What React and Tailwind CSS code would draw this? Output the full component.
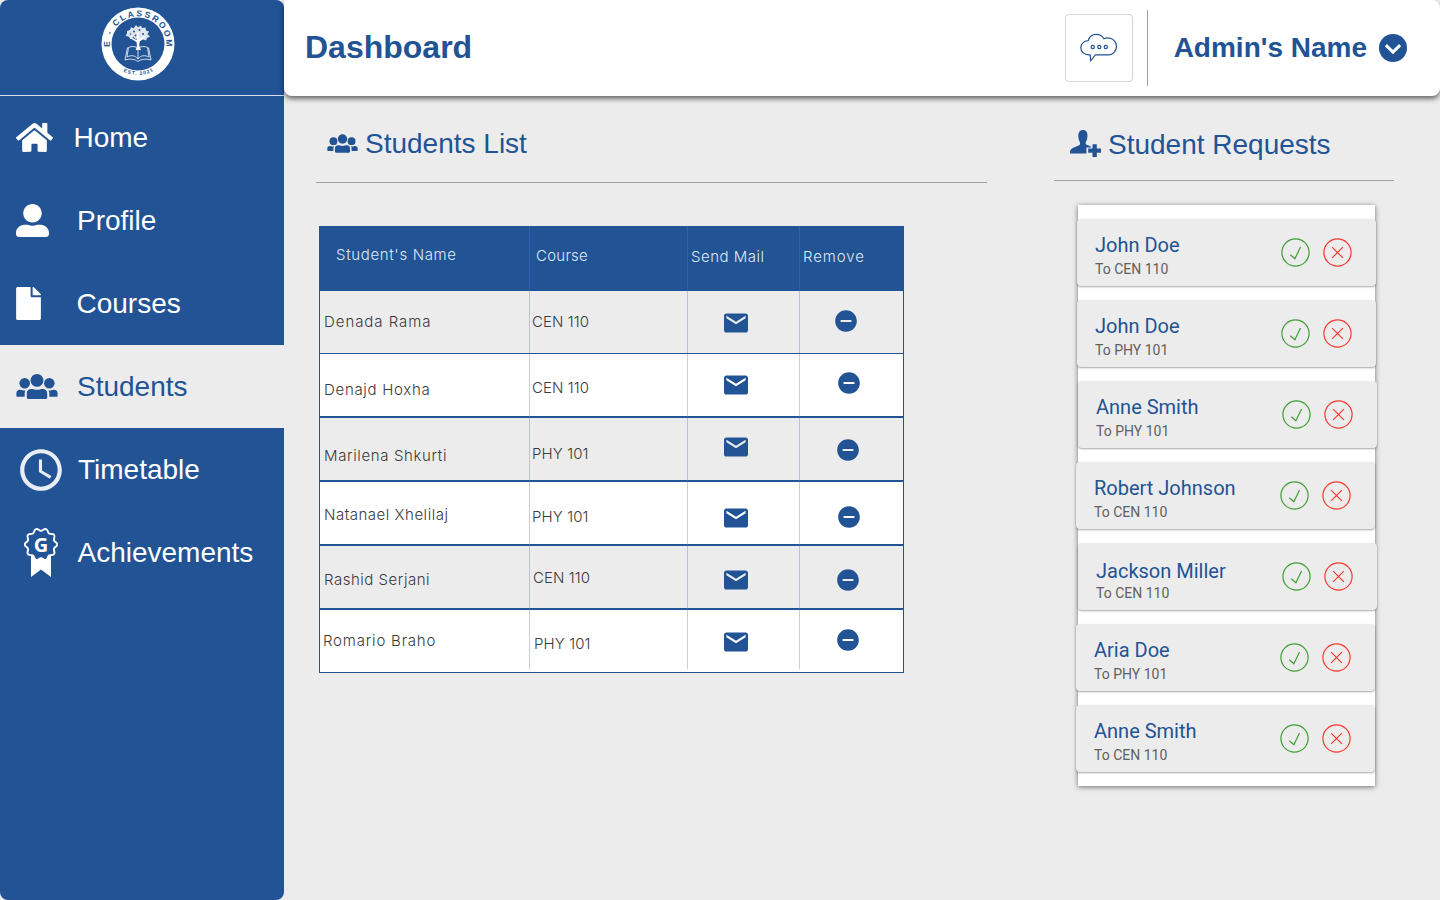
import React from "react";
import { FaHome, FaUserAlt, FaFile } from "react-icons/fa";
import { MdAccessTime, MdEmail, MdRemoveCircle } from "react-icons/md";

function Logo() {
  return (
    <svg width="74" height="74" viewBox="0 0 74 74">
      <circle cx="37" cy="37" r="36.5" fill="#fff" />
      <circle cx="37" cy="37" r="26.5" fill="#225395" />
      <defs>
        <path id="ringTop" d="M8.8 40 A28.3 28.3 0 1 1 65.2 40" />
        <path id="ringBottom" d="M10 53 A31.8 31.8 0 0 0 64 53" />
      </defs>
      <text fill="#225395" fontFamily="'Liberation Sans Narrow', 'Liberation Sans', sans-serif" fontWeight="700" fontSize="8.5">
        <textPath href="#ringTop" startOffset="0" textLength="93" lengthAdjust="spacing">E - CLASSROOM</textPath>
      </text>
      <text fill="#225395" fontFamily="'Liberation Sans Narrow', 'Liberation Sans', sans-serif" fontWeight="700" fontSize="5">
        <textPath href="#ringBottom" startOffset="17" textLength="31" lengthAdjust="spacing">EST. 2021</textPath>
      </text>
      <g fill="#fff">
        <path d="M34.5 43c1.5-3 1.700-5 .9-8l-6-3.700.6-1 5.600 2.700.4-8h1.500l.5 7.500 5-3.500.7 1-5 4.500c-.8 3-.4 5.500 1.300 8.500z" />
        <path d="M26 24l3-1 1-3 2.500 1.500L35 18l2 2.200 3-1.800 1 2.600 3.500-.5.500 3 3 1-1.500 2.700 2.500 2.300-3 1.500-1 2.500-3-1-3 1.500-1.500-3-3 1-2-2-3 2-2-2.500-3-.5 1.500-2.500z" fillOpacity="0.85" />
      </g>
      <g fill="#225395">
        <circle cx="33" cy="24.5" r="1" />
        <circle cx="38.5" cy="23" r="1" />
        <circle cx="42" cy="27" r="1" />
        <circle cx="34.5" cy="28.5" r="0.9" />
        <circle cx="29.5" cy="27" r="0.8" />
      </g>
      <g fill="none" stroke="#fff" strokeWidth="0.8">
        <path d="M37 52c-3-4-7-4-11-2l1.500-9.500c3-1.500 6-1.200 8 0M37 52c3-4 7-4 11-2l-1.500-9.500c-3-1.500-6-1.200-8 0M37 43v9" />
        <path d="M26.5 40.5L24 53c5-1.500 10-1 13 1.500 3-2.500 8-3 13-1.500l-2.500-12.500" />
      </g>
    </svg>
  );
}

function UsersIcon({ className }) {
  return (
    <svg className={className} viewBox="0 0 42 25" fill="currentColor">
      <circle cx="21" cy="6.4" r="6.4" />
      <circle cx="8.7" cy="9.3" r="5.3" />
      <circle cx="33.3" cy="9.3" r="5.3" />
      <path d="M10.8 23.5v-4.300c0-2.600 1.800-4.300 4.300-4.300.9 0 1.600.2 2.300.4 2.300.7 4.900.7 7.200 0 .7-.2 1.400-.4 2.300-.4 2.500 0 4.300 1.700 4.300 4.300v4.300c0 .9-.6 1.500-1.500 1.500H12.300c-.9 0-1.500-.6-1.500-1.500z" />
      <path d="M.4 21.7v-2.600c0-1.900 1.400-3.300 3.400-3.300.6 0 1.200.1 1.700.3 1.300.4 2.600.5 4 .2-.6 1-.8 2-.8 3.200v3.300H1.400c-.6 0-1-.4-1-1.100z" />
      <path d="M41.6 21.7v-2.600c0-1.900-1.400-3.300-3.400-3.300-.6 0-1.200.1-1.700.3-1.300.4-2.600.5-4 .2.600 1 .8 2 .8 3.200v3.300h7.300c.6 0 1-.4 1-1.100z" />
    </svg>
  );
}

function AwardIcon() {
  const points = Array.from({ length: 96 }, (_, i) => {
    const a = (i / 96) * Math.PI * 2;
    const r = 14.9 + 1.3 * Math.cos(a * 10 + Math.PI);
    return `${(17 + r * Math.sin(a)).toFixed(2)},${(16.5 - r * Math.cos(a)).toFixed(2)}`;
  }).join(" ");
  return (
    <svg width="34" height="50" viewBox="0 0 34 50">
      <path d="M7 27h20v22l-10-7.500L7 49z" fill="#fff" />
      <polygon points={points} fill="#225395" stroke="#fff" strokeWidth="1.9" strokeLinejoin="round" />
      <text x="17" y="23.5" textAnchor="middle" fill="#fff" fontFamily="'Open Sans', sans-serif" fontWeight="700" fontSize="20">
        G
      </text>
    </svg>
  );
}

function ChevronCircleIcon() {
  return (
    <svg width="28" height="28" viewBox="0 0 28 28">
      <circle cx="14" cy="14" r="14" fill="#225395" />
      <path d="M6.900 11.100l7.100 7 7.100-7" fill="none" stroke="#fff" strokeWidth="3" />
    </svg>
  );
}

function ChatCloudIcon() {
  return (
    <svg width="38" height="30" viewBox="0 0 38 30" fill="none" stroke="#225395" strokeWidth="1.2" strokeLinejoin="round">
      <path d="M10.200 21.900H8.500C4 21.600.8 18.600.8 14.800c0-3.900 3-7 7.500-7.200C9.300 3.800 12.500 1.300 16.300 1.300c3.400 0 6.200 1.700 7.600 4.500 1.200-.6 2.500-.9 3.900-.9 5 0 8.700 3.800 8.700 8.500 0 4.600-3.700 8.500-8 8.500H15.300L10.600 28z" />
      <circle cx="12.800" cy="14" r="1.6" />
      <circle cx="19.300" cy="14" r="1.6" />
      <circle cx="25.800" cy="14" r="1.6" />
    </svg>
  );
}

function UserPlusIcon() {
  return (
    <svg className="-mt-0.5" width="32" height="28" viewBox="0 0 32 28" fill="#225395">
      <path d="M13 0c3 0 4.500 2 4.500 5.500 0 3-.8 5.300-1.800 6.800v1.900c1.300.8 3.300 1.400 4.500 2l.7.400v1h-4.500v5.900H0c0-3.600.8-4.600 3.300-5.800 2.200-1 5.200-1.900 6.700-3.300v-2C9 10.900 8.300 8.500 8.300 5.500 8.300 2 10 0 13 0z" />
      <path d="M22.5 14.200h4.300v4.400H31v4.100h-4.200V27h-4.300v-4.300h-4.300v-4.100h4.300z" />
    </svg>
  );
}

function AcceptIcon() {
  return (
    <svg width="29" height="29" viewBox="0.5 0.5 29 29" fill="none" stroke="#3f9f35" strokeWidth="1.2">
      <circle cx="15" cy="15" r="13.6" />
      <path d="M9.800 17.200l4.600 4L20 9.600" />
    </svg>
  );
}

function RejectIcon() {
  return (
    <svg width="29" height="29" viewBox="0.5 0.5 29 29" fill="none" stroke="#f43a30" strokeWidth="1.2">
      <circle cx="15" cy="15" r="13.6" />
      <path d="M9.600 9.600l10.800 10.800M20.400 9.600L9.600 20.400" />
    </svg>
  );
}

const navItems = [
  { label: "Home", icon: <FaHome className="h-[33px] w-[37px]" />, iconPad: "pl-4 w-[73.5px]" },
  { label: "Profile", icon: <FaUserAlt className="size-[33px]" />, iconPad: "pl-4 w-[77px]" },
  { label: "Courses", icon: <FaFile className="h-[33px] w-[25px]" />, iconPad: "pl-4 w-[76.5px]" },
  { label: "Students", icon: <UsersIcon className="h-[25px] w-[42px]" />, iconPad: "pl-4 w-[77px]", active: true },
  { label: "Timetable", icon: <MdAccessTime className="size-[50px] opacity-90" />, iconPad: "pl-4 w-[78px]" },
  { label: "Achievements", icon: <AwardIcon />, iconPad: "pl-6 w-[77.5px]" },
];

function Sidebar() {
  return (
    <aside className="flex w-[284px] shrink-0 flex-col rounded-lg bg-[#225395]">
      <div className="flex h-24 justify-center border-b border-[#d5deea] pr-2 pt-[7px]">
        <Logo />
      </div>
      <nav className="flex flex-col">
        {navItems.map((item) => (
          <a
            key={item.label}
            className={
              "flex h-[83px] items-center text-[28px] leading-8 " +
              (item.active ? "bg-[#ececec] text-[#225395]" : "text-white")
            }
          >
            <span className={"shrink-0 " + item.iconPad}>{item.icon}</span>
            <span>{item.label}</span>
          </a>
        ))}
      </nav>
    </aside>
  );
}

function Header() {
  return (
    <header className="flex h-24 items-start rounded-b-lg rounded-tr-lg bg-white pl-[21px] pr-[33px] text-[#225395] shadow-[0_3px_5px_rgba(0,0,0,0.55)]">
      <h1 className="mt-[29px] text-[32px] font-bold leading-9">Dashboard</h1>
      <button className="ml-auto mt-3.5 flex h-[68px] w-[68px] items-center justify-center rounded border border-[#d4d4d4]">
        <ChatCloudIcon />
      </button>
      <div className="ml-3.5 mt-2.5 h-[76px] w-px bg-[#a0a0a0]" />
      <div className="ml-[26px] mt-8 flex items-center gap-3">
        <span className="text-[28px] font-bold leading-8">Admin's Name</span>
        <ChevronCircleIcon />
      </div>
    </header>
  );
}

const rows = [
  { name: "Denada Rama", n: "pt-[21px] pl-1 tracking-[0.95px]", course: "CEN 110", c: "pt-[21px] pl-[3px]", m: "pt-[17px]", r: "pt-[17px] pl-[34px]", box: "bg-[#ececec] h-[63px] border-b" },
  { name: "Denajd Hoxha", n: "pt-[26px] pl-1 tracking-[0.7px]", course: "CEN 110", c: "pt-6 pl-[3px]", m: "pt-4", r: "pt-4 pl-[37px]", box: "bg-white h-16 border-b-2" },
  { name: "Marilena Shkurti", n: "pt-7 pl-1 tracking-[0.63px]", course: "PHY 101", c: "pt-[26px] pl-[3px]", m: "pt-3.5", r: "pt-[19px] pl-9", box: "bg-[#ececec] h-16 border-b-2" },
  { name: "Natanael Xhelilaj", n: "pt-[23px] pl-1 tracking-[0.52px]", course: "PHY 101", c: "pt-[25px] pl-[3px]", m: "pt-[21px]", r: "pt-[22px] pl-[37px]", box: "bg-white h-16 border-b-2" },
  { name: "Rashid Serjani", n: "pt-6 pl-1 tracking-[0.52px]", course: "CEN 110", c: "pt-[22px] pl-1", m: "pt-[19px]", r: "pt-[21px] pl-9", box: "bg-[#ececec] h-16 border-b-2" },
  { name: "Romario Braho", n: "pt-[21px] pl-[3px] tracking-[0.8px]", course: "PHY 101", c: "pt-6 pl-[5px]", m: "pt-[17px]", r: "pt-[17px] pl-9", box: "bg-white h-[62px]" },
];

function StudentsTable() {
  return (
    <div className="relative ml-[3px] mt-[43px] w-[585px] border border-t-0 border-[#225395] font-['Inter',sans-serif] text-[15px] font-light leading-5 text-[#3a3a3a]">
      <div className="grid h-[65px] grid-cols-[210px_158px_112px_103px] bg-[#225395] text-[#dfe8f4]">
        <div className="pl-4 pt-[19px] tracking-[0.65px]">Student's Name</div>
        <div className="pl-1.5 pt-5 tracking-[0.25px]">Course</div>
        <div className="pl-[3px] pt-[21px] tracking-[0.5px]">Send Mail</div>
        <div className="pl-[3px] pt-[21px] tracking-[0.9px]">Remove</div>
      </div>
      {rows.map((row) => (
        <div key={row.name} className={"grid grid-cols-[209px_158px_112px_104px] border-[#225395] " + row.box}>
          <div className={row.n}>{row.name}</div>
          <div className={"tracking-[0.1px] " + row.c}>{row.course}</div>
          <div className={"pl-[34px] text-[#225395] " + row.m}>
            <MdEmail viewBox="-0.5 -0.5 25 25" className="size-[30px]" />
          </div>
          <div className={"text-[#225395] " + row.r}>
            <MdRemoveCircle className="size-[26px]" />
          </div>
        </div>
      ))}
      <div className="pointer-events-none absolute left-[209px] top-0 h-[443px] w-px bg-[#5a6ef0]/35" />
      <div className="pointer-events-none absolute left-[367px] top-0 h-[443px] w-px bg-[#5a6ef0]/35" />
      <div className="pointer-events-none absolute left-[479px] top-0 h-[443px] w-px bg-[#5a6ef0]/35" />
    </div>
  );
}

const requests = [
  { name: "John Doe", course: "To CEN 110", shift: "-ml-px" },
  { name: "John Doe", course: "To PHY 101", shift: "-ml-px" },
  { name: "Anne Smith", course: "To PHY 101", shift: "ml-0" },
  { name: "Robert Johnson", course: "To CEN 110", shift: "-ml-0.5" },
  { name: "Jackson Miller", course: "To CEN 110", shift: "ml-0", low: true },
  { name: "Aria Doe", course: "To PHY 101", shift: "-ml-0.5" },
  { name: "Anne Smith", course: "To CEN 110", shift: "-ml-0.5" },
];

function RequestCard({ name, course, shift, low }) {
  return (
    <div
      className={
        "flex h-[67px] w-[299px] shrink-0 items-start rounded bg-[#ececec] pl-[18px] pr-6 font-['Roboto',sans-serif] shadow-[0_1px_2px_rgba(0,0,0,0.35)] " +
        shift
      }
    >
      <div className="flex flex-col">
        <span className={"text-xl leading-6 text-[#225395] " + (low ? "pt-4" : "pt-3.5")}>{name}</span>
        <span className={"text-sm leading-5 text-[#606060] " + (low ? "" : "pt-0.5")}>{course}</span>
      </div>
      <div className="ml-auto mt-[19px] flex gap-[13px]">
        <AcceptIcon />
        <RejectIcon />
      </div>
    </div>
  );
}

export default function App() {
  return (
    <div className="flex h-[900px] w-[1440px] overflow-hidden bg-[#ececec] font-['Liberation_Sans',sans-serif]">
      <Sidebar />
      <div className="flex flex-1 flex-col">
        <Header />
        <main className="flex items-start">
          <section className="ml-8 w-[671px]">
            <h2 className="flex h-[87px] items-center gap-[7px] border-b border-[#a0a0a0] pl-[11px] pt-[9px] text-[28px] leading-8 text-[#225395]">
              <UsersIcon className="h-[19px] w-[31px]" />
              Students List
            </h2>
            <StudentsTable />
          </section>
          <section className="ml-[67px] w-[340px]">
            <h2 className="flex h-[85px] items-center gap-1.5 border-b border-[#a0a0a0] pb-px pl-4 pt-[15px] text-[28px] leading-8 text-[#225395]">
              <UserPlusIcon />
              Student Requests
            </h2>
            <div className="ml-6 mt-6 flex h-[581px] w-[297px] flex-col gap-3.5 bg-white pt-3.5 shadow-[0_1px_5px_rgba(0,0,0,0.55)]">
              {requests.map((r, i) => (
                <RequestCard key={i} {...r} />
              ))}
            </div>
          </section>
        </main>
      </div>
    </div>
  );
}
